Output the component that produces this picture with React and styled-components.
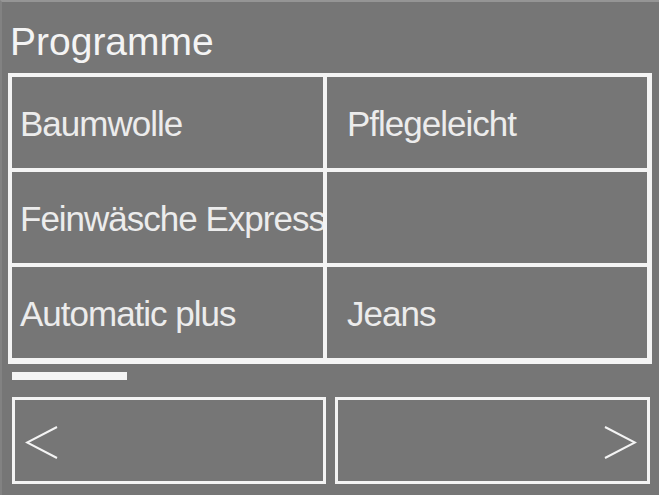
import React from "react";
import styled, { createGlobalStyle } from "styled-components";

const GlobalStyle = createGlobalStyle`
  html, body {
    margin: 0;
    padding: 0;
    background: #767676;
  }
  * {
    box-sizing: border-box;
  }
`;

const programs = [
  ["Baumwolle", "Pflegeleicht"],
  ["Feinwäsche Express", ""],
  ["Automatic plus", "Jeans"],
];

function Chevron({ dir }) {
  const points = dir === "left" ? "32,1 2,16.5 32,32" : "2,1 32,16.5 2,32";
  return (
    <svg width="34" height="33" viewBox="0 0 34 33">
      <polyline points={points} fill="none" stroke="#f4f4f4" strokeWidth="2" />
    </svg>
  );
}

function App() {
  return (
    <Screen>
      <GlobalStyle />
      <Header>Programme</Header>
      <Frame>
        {programs.map((row, i) =>
          row.map((label, j) => (
            <Cell key={`${i}-${j}`} $inset={j === 0 ? 8 : 20}>
              <span>{label}</span>
            </Cell>
          ))
        )}
      </Frame>
      <Scroll>
        <ScrollThumb />
      </Scroll>
      <Nav>
        <NavButton $align="flex-start">
          <Chevron dir="left" />
        </NavButton>
        <NavButton $align="flex-end">
          <Chevron dir="right" />
        </NavButton>
      </Nav>
    </Screen>
  );
}

const Screen = styled.div`
  width: 659px;
  height: 495px;
  display: flex;
  flex-direction: column;
  background: #767676;
  border-top: 2px solid #959595;
  border-left: 2px solid #828282;
  overflow: hidden;
  font-family: "Liberation Sans", Arial, sans-serif;
  color: #f4f4f4;
`;

const Header = styled.div`
  height: 71px;
  padding: 18px 0 0 8px;
  font-size: 39px;
  line-height: 44px;
`;

const Frame = styled.div`
  margin: 0 7px 0 6px;
  height: 291px;
  display: grid;
  grid-template-columns: 311px 1fr;
  grid-template-rows: 1fr 1fr 1fr;
  gap: 4px;
  background: #f4f4f4;
  border-style: solid;
  border-color: #f4f4f4;
  border-width: 4px 5px 6px 4px;
`;

const Cell = styled.div`
  display: flex;
  align-items: center;
  padding: 3px 0 0 ${(p) => p.$inset}px;
  background: #767676;
  overflow: hidden;
  white-space: nowrap;
  font-size: 35px;
  letter-spacing: -1px;
  color: #ececec;
`;

const Scroll = styled.div`
  padding: 8px 0 0 10px;
  height: 33px;
`;

const ScrollThumb = styled.div`
  width: 115px;
  height: 8px;
  background: #f4f4f4;
`;

const Nav = styled.div`
  display: grid;
  grid-template-columns: 314px 315px;
  gap: 9px;
  padding-left: 10px;
`;

const NavButton = styled.div`
  height: 87px;
  display: flex;
  align-items: center;
  justify-content: ${(p) => p.$align};
  padding: 4px 10px 0;
  border: 3px solid #f4f4f4;
`;

export default App;
